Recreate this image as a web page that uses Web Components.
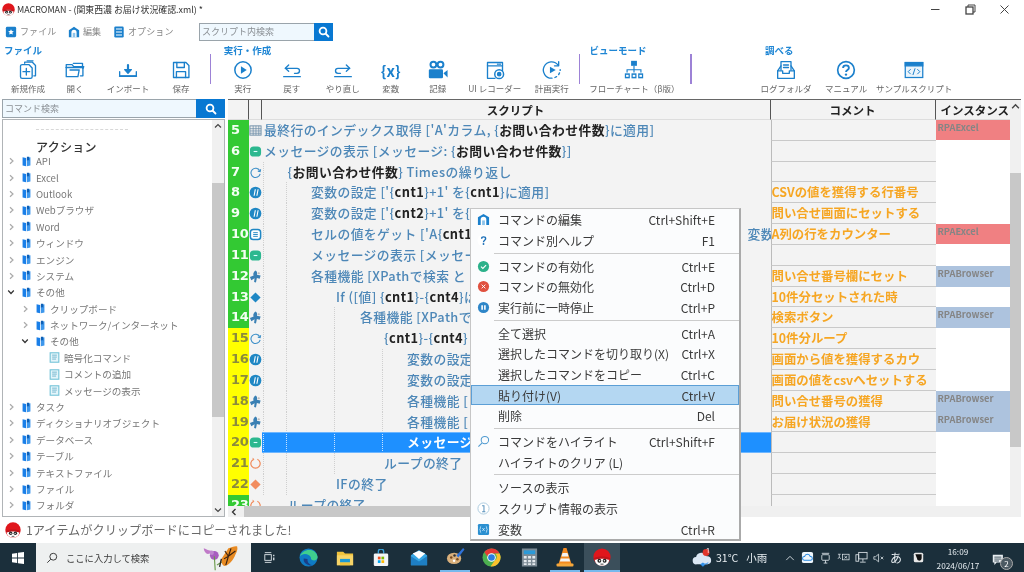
<!DOCTYPE html>
<html lang="ja"><head><meta charset="utf-8"><title>MACROMAN</title>
<style>
html,body{margin:0;padding:0;background:#fff;overflow:hidden}
body{font-family:"Noto Sans CJK JP","Noto Sans",sans-serif;color:#555;width:1024px;height:572px}
</style></head><body>
<app-window>
  <title-bar>MACROMAN - (関東西濃 お届け状況確認.xml) *</title-bar>
  <menu-row>
    <menu-tab icon="tabfile" w="63">ファイル</menu-tab>
    <menu-tab icon="tabedit" w="45">編集</menu-tab>
    <menu-tab icon="tabopt" w="86">オプション</menu-tab>
    <search-box w="134" h="18" btn="19">スクリプト内検索</search-box>
  </menu-row>
  <tool-ribbon>
    <tool-group label="ファイル" lp="4" bp="4" w="210">
      <tool-btn w="48" icon="new">新規作成</tool-btn>
      <tool-btn w="46" icon="open">開く</tool-btn>
      <tool-btn w="60" icon="import">インポート</tool-btn>
      <tool-btn w="46" icon="save">保存</tool-btn>
    </tool-group>
    <tool-sep></tool-sep>
    <tool-group label="実行・作成" lp="12.5" bp="6.5" w="367.5">
      <tool-btn w="50" icon="run">実行</tool-btn>
      <tool-btn w="48" icon="undo">戻す</tool-btn>
      <tool-btn w="54" icon="redo">やり直し</tool-btn>
      <tool-btn w="42" glyph="{x}">変数</tool-btn>
      <tool-btn w="52" icon="rec">記録</tool-btn>
      <tool-btn w="62" icon="uirec">UI レコーダー</tool-btn>
      <tool-btn w="52" icon="plan">計画実行</tool-btn>
    </tool-group>
    <tool-sep></tool-sep>
    <tool-group label="ビューモード" lp="9.5" bp="3.5" w="110.5">
      <tool-btn w="102" icon="flow">フローチャート（β版）</tool-btn>
    </tool-group>
    <tool-sep></tool-sep>
    <tool-group label="調べる" lp="73.5" bp="57.5" w="300">
      <tool-btn w="74" icon="log">ログフォルダ</tool-btn>
      <tool-btn w="46" icon="help">マニュアル</tool-btn>
      <tool-btn w="90" icon="sample">サンプルスクリプト</tool-btn>
    </tool-group>
  </tool-ribbon>
  <main-area>
    <command-panel>
      <search-box w="223" h="19" btn="29">コマンド検索</search-box>
      <command-tree>
        <tree-head>アクション</tree-head>
        <tree-item lv="0" kind="c">API</tree-item>
        <tree-item lv="0" kind="c">Excel</tree-item>
        <tree-item lv="0" kind="c">Outlook</tree-item>
        <tree-item lv="0" kind="c">Webブラウザ</tree-item>
        <tree-item lv="0" kind="c">Word</tree-item>
        <tree-item lv="0" kind="c">ウィンドウ</tree-item>
        <tree-item lv="0" kind="c">エンジン</tree-item>
        <tree-item lv="0" kind="c">システム</tree-item>
        <tree-item lv="0" kind="o">その他</tree-item>
        <tree-item lv="1" kind="c">クリップボード</tree-item>
        <tree-item lv="1" kind="c">ネットワーク/インターネット</tree-item>
        <tree-item lv="1" kind="o">その他</tree-item>
        <tree-item lv="2" kind="d">暗号化コマンド</tree-item>
        <tree-item lv="2" kind="d">コメントの追加</tree-item>
        <tree-item lv="2" kind="d">メッセージの表示</tree-item>
        <tree-item lv="0" kind="c">タスク</tree-item>
        <tree-item lv="0" kind="c">ディクショナリオブジェクト</tree-item>
        <tree-item lv="0" kind="c">データベース</tree-item>
        <tree-item lv="0" kind="c">テーブル</tree-item>
        <tree-item lv="0" kind="c">テキストファイル</tree-item>
        <tree-item lv="0" kind="c">ファイル</tree-item>
        <tree-item lv="0" kind="c">フォルダ</tree-item>
      </command-tree>
    </command-panel>
    <script-grid></script-grid>
  </main-area>
  <status-bar>1アイテムがクリップボードにコピーされました!</status-bar>
  <task-bar></task-bar>
  <context-menu>
    <menu-item icon="mEdit" key="Ctrl+Shift+E">コマンドの編集</menu-item>
    <menu-item icon="mHelp" key="F1">コマンド別ヘルプ</menu-item>
    <menu-sep></menu-sep>
    <menu-item icon="mOk" key="Ctrl+E">コマンドの有効化</menu-item>
    <menu-item icon="mNo" key="Ctrl+D">コマンドの無効化</menu-item>
    <menu-item icon="mPause" key="Ctrl+P">実行前に一時停止</menu-item>
    <menu-sep></menu-sep>
    <menu-item key="Ctrl+A">全て選択</menu-item>
    <menu-item key="Ctrl+X">選択したコマンドを切り取り(X)</menu-item>
    <menu-item key="Ctrl+C">選択したコマンドをコピー</menu-item>
    <menu-item key="Ctrl+V" active>貼り付け(V)</menu-item>
    <menu-item key="Del">削除</menu-item>
    <menu-sep></menu-sep>
    <menu-item icon="mFind" key="Ctrl+Shift+F">コマンドをハイライト</menu-item>
    <menu-item>ハイライトのクリア (L)</menu-item>
    <menu-sep></menu-sep>
    <menu-item>ソースの表示</menu-item>
    <menu-item icon="mInfo">スクリプト情報の表示</menu-item>
    <menu-item icon="mVar" key="Ctrl+R">変数</menu-item>
  </context-menu>
</app-window>
<script>
const B='#1b80cc';
const st=`fill="none" stroke="${B}" stroke-width="1.6" stroke-linecap="round" stroke-linejoin="round"`;
const logo=`<svg viewBox="0 0 24 24"><circle cx="12" cy="12" r="11.5" fill="#e0161c"/><path d="M2.5 15.5C5 11 19 11 21.5 15.5 21 21 17 23.5 12 23.5S3 21 2.5 15.5z" fill="#fff"/><path d="M1 14c4-3.500 18-3.500 22 0-1 1.500-2 1.800-3 1.500-4-1.500-12-1.500-16 0-1 .3-2.200 0-3-1.500z" fill="#c0141a"/><circle cx="8.500" cy="17" r="2.600" fill="#222"/><circle cx="15.500" cy="17" r="2.600" fill="#222"/><circle cx="8.800" cy="17" r="1" fill="#fff"/><circle cx="15.200" cy="17" r="1" fill="#fff"/><path d="M10 21.500h4" stroke="#333" stroke-width="1.200"/></svg>`;
const ICONS={
logo,
new:`<svg viewBox="0 0 24 24" ${st}><path d="M8 4V2.500h9l4 4V19h-2"/><path d="M11 1h7"/><path d="M3 7.500a2 2 0 0 1 2-2h8l4 4V20a2 2 0 0 1-2 2H5a2 2 0 0 1-2-2z"/><path d="M10 10v8M6 14h8"/></svg>`,
open:`<svg viewBox="0 0 24 24" ${st}><path d="M1.500 9V5.500h7l2 2.500h12l-1 2"/><path d="M1.500 9h20v10h-3" /><path d="M1.500 9v11h14l1.500-8H6"/><path d="M21 8V4H10"/></svg>`,
import:`<svg viewBox="0 0 24 24" ${st}><path d="M2 14v5h20v-5" stroke-width="1.600"/><path d="M2 19.500h20" stroke-width="2"/><path d="M12 6v7" stroke-width="2.600"/><path d="M8 11.500l4 4.500 4-4.500z" fill="${B}"/></svg>`,
save:`<svg viewBox="0 0 24 24" ${st} stroke-width="1.800"><path d="M3 3h15l3.500 3.500V21H3z"/><path d="M7 3v6h9V3"/><path d="M6.500 21v-7h11v7"/></svg>`,
run:`<svg viewBox="0 0 24 24" ${st}><circle cx="12" cy="12" r="9.800" stroke-width="1.800"/><path d="M9.500 7.500l7 4.500-7 4.500z" fill="${B}" stroke="none"/></svg>`,
undo:`<svg viewBox="0 0 24 24" ${st} stroke-width="1.800"><path d="M2 20h20"/><path d="M8 6L4 10l4 3.500"/><path d="M4 10h14a3 3 0 0 1 0 6h-3"/></svg>`,
redo:`<svg viewBox="0 0 24 24" ${st} stroke-width="1.800"><path d="M2 20h20"/><path d="M16 6l4 4-4 3.500"/><path d="M20 10H6a3 3 0 0 0 0 6h3"/></svg>`,
rec:`<svg viewBox="0 0 24 24"><circle cx="6.500" cy="5.500" r="3.500" fill="none" stroke="${B}" stroke-width="2.400"/><circle cx="15" cy="5.500" r="3.500" fill="none" stroke="${B}" stroke-width="2.400"/><rect x="1" y="11" width="17" height="11" rx="1.500" fill="${B}"/><path d="M18.500 16l5-4v9z" fill="${B}"/></svg>`,
uirec:`<svg viewBox="0 0 24 24" ${st}><path d="M21 13V3H3v19h9"/><path d="M3 7h18"/><path d="M15 5h1M17.500 5h1" /><circle cx="17" cy="17" r="5.300" stroke-width="1.800"/><circle cx="17" cy="17" r="2" fill="${B}"/></svg>`,
plan:`<svg viewBox="0 0 24 24" ${st} stroke-width="1.800"><path d="M19.500 6.500A9.800 9.800 0 1 0 12 21.800"/><path d="M15.500 21l2-1M20 17.500l1-2M21.800 12.500v-1" /><path d="M20 2v5h-5"/><path d="M9.500 8l7 4-7 4z" fill="${B}" stroke="none"/></svg>`,
flow:`<svg viewBox="0 0 24 24" fill="${B}"><rect x="8.500" y="1" width="7" height="6"/><path d="M11.300 7h1.400v4H21v4h-1.400v-2.600h-6.900V15h-1.400v-2.600H4.400V15H3v-4h8.300z"/><rect x="1" y="16" width="6" height="6"/><rect x="9" y="16" width="6" height="6"/><rect x="17" y="16" width="6" height="6"/><rect x="2.500" y="17.800" width="3" height="2.400" fill="#fff"/><rect x="10.500" y="17.800" width="3" height="2.400" fill="#fff"/><rect x="18.500" y="17.800" width="3" height="2.400" fill="#fff"/></svg>`,
log:`<svg viewBox="0 0 24 24" ${st} stroke-width="1.800"><path d="M6 12V2h12v10"/><path d="M9 6h6M9 9h6"/><path d="M6 7L2 13v9h20v-9l-4-6"/><path d="M2 13h6v3h8v-3h6"/></svg>`,
help:`<svg viewBox="0 0 24 24" fill="none"><circle cx="12" cy="12" r="10" stroke="${B}" stroke-width="2"/><path d="M8.500 9.500C8.500 5.500 15.500 5.500 15.500 9.500c0 2.500-3.500 2.500-3.500 5" stroke="${B}" stroke-width="2.200"/><circle cx="12" cy="17.500" r="1.400" fill="${B}"/></svg>`,
sample:`<svg viewBox="0 0 24 24" fill="none" stroke="${B}" stroke-width="1.500"><rect x="1.500" y="3" width="21" height="18" fill="#eaf4fb"/><path d="M1.500 3h21v4h-21z" fill="${B}"/><path d="M8 11l-3 3 3 3M16 11l3 3-3 3M13.300 10l-2.600 8" stroke-width="1.200"/></svg>`,
search:`<svg viewBox="0 0 24 24" fill="none" stroke="#fff" stroke-width="3.600" stroke-linecap="round"><circle cx="10" cy="10" r="6.800"/><path d="M15.500 15.500L21 21"/></svg>`,
tabfile:`<svg viewBox="0 0 14 14"><rect x="1" y="1" width="12" height="12" rx="1.500" fill="${B}"/><path d="M7 3.800l1 2.100 2.300.3-1.700 1.500.5 2.300L7 9l-2.100 1 .5-2.300L3.700 6.200 6 5.900z" fill="#fff"/></svg>`,
tabedit:`<svg viewBox="0 0 14 14"><path d="M1 13V5l6-4 6 4v8z" fill="${B}"/><path d="M4 13V7.500a3 3 0 0 1 6 0V13z" fill="#fff"/><path d="M5.500 13V8h3v5z" fill="#8cc3ea"/></svg>`,
tabopt:`<svg viewBox="0 0 14 14"><rect x="1.500" y="0.500" width="11" height="13" rx="1.500" fill="${B}"/><path d="M3.500 3.500h7M3.500 7h7M3.500 10.500h7" stroke="#fff" stroke-width="1.300"/></svg>`,
book:`<svg viewBox="0 0 12 14"><path d="M1 1.500L5.500 2.500V13L1 12z" fill="#1a7fe8"/><path d="M6.500 2.500L11 1.500V12L6.500 13z" fill="#3d97ec"/><path d="M6.500 1h3v5L8 5 6.500 6z" fill="#0d5fb5"/></svg>`,
doc:`<svg viewBox="0 0 14 14"><rect x="1.500" y="1" width="11" height="12" fill="#e4f5fa" stroke="#74c3d8" stroke-width="1.400"/><path d="M4 4h6M4 6.500h6M4 9h5" stroke="#5ba8c4" stroke-width="1"/></svg>`,
gridI:`<svg viewBox="0 0 14 14"><rect x="1" y="2" width="12" height="10" fill="#eee" stroke="#6f8fa8"/><path d="M1 5h12M1 7.500h12M1 10h12M4.500 2v10M7.500 2v10M10.500 2v10" stroke="#6f8fa8" stroke-width=".8"/></svg>`,
msgI:`<svg viewBox="0 0 14 14"><rect x="1" y="1.500" width="12" height="11" rx="4" fill="#2cb88f"/><path d="M5 7h4" stroke="#dff" stroke-width="1.200"/></svg>`,
loopI:`<svg viewBox="0 0 14 14" fill="none" stroke="#3c8fc8" stroke-width="1.200"><path d="M11.500 5A5 5 0 1 0 12 8.500"/><path d="M9.500 5.500l2.500.5.500-2.500"/></svg>`,
varI:`<svg viewBox="0 0 14 14"><circle cx="7" cy="7" r="6.300" fill="#1f87c4"/><path d="M6.800 3.500L5.500 10.500M9.800 3.500L8.500 10.500" stroke="#fff" stroke-width="1.200"/></svg>`,
cellI:`<svg viewBox="0 0 14 14"><rect x="1.500" y="1.500" width="11" height="11" rx="3" fill="#fff" stroke="#1f87c4" stroke-width="1.600"/><path d="M4.500 5h5M4.500 7h5M4.500 9h5" stroke="#1f87c4"/></svg>`,
funcI:`<svg viewBox="0 0 14 14" fill="#3a80b4"><path d="M7 .5c2 1 2 3 1.500 4.500l4 1-1 3.500-3-1-1 5-2-.5L6 9 2.500 11 1 7.500l4-1.500C4 4 5 2 7 .5z"/><circle cx="10.500" cy="3.500" r="1.200" fill="#bbb"/></svg>`,
ifI:`<svg viewBox="0 0 14 14"><path d="M7 1.500L12.500 7 7 12.500 1.500 7z" fill="#1f87c4"/></svg>`,
loopE:`<svg viewBox="0 0 14 14" fill="none" stroke="#f08a5a" stroke-width="1.300"><path d="M9 2.500A5 5 0 1 1 5 2.500"/><path d="M4 1l1.200 1.700L3.500 4" stroke-width="1"/></svg>`,
ifE:`<svg viewBox="0 0 14 14"><path d="M7 1.500L12.500 7 7 12.500 1.500 7z" fill="#f28c5e"/></svg>`,
mEdit:`<svg viewBox="0 0 14 14"><path d="M1 13V4.500L7 1l6 3.500V13z" fill="#1b80cc"/><path d="M4 13V7a3 3 0 0 1 6 0v6z" fill="#fff"/><path d="M5.500 13V8h3v5z" fill="#8cc3ea"/></svg>`,
mOk:`<svg viewBox="0 0 14 14"><circle cx="7" cy="7" r="6" fill="#2cb18a"/><path d="M4.300 7.200L6.300 9l3.500-3.600" stroke="#fff" stroke-width="1.200" fill="none"/></svg>`,
mNo:`<svg viewBox="0 0 14 14"><circle cx="7" cy="7" r="6" fill="#e0513f"/><path d="M5 5l4 4M9 5l-4 4" stroke="#fff" stroke-width="1"/></svg>`,
mPause:`<svg viewBox="0 0 14 14"><circle cx="7" cy="7" r="6" fill="#2e86c8"/><path d="M5.500 4.500v5M8.500 4.500v5" stroke="#fff" stroke-width="1.700"/></svg>`,
mFind:`<svg viewBox="0 0 14 14" fill="none" stroke="#4f9ad0" stroke-width="1.100"><circle cx="8.500" cy="5.500" r="4"/><path d="M5.500 8.500L1.500 12.500"/></svg>`,
mInfo:`<svg viewBox="0 0 14 14"><circle cx="7" cy="7" r="6" fill="#fff" stroke="#a9c9de"/><path d="M5.500 4h2v6M5.500 10.500h3.500" stroke="#5b93bd" stroke-width="1.100" fill="none"/></svg>`,
mVar:`<svg viewBox="0 0 14 14"><rect x="1" y="1" width="12" height="12" rx="1.500" fill="#2a8fd0"/><path d="M4.500 3.500C3 3.500 4 7 3 7c1 0 0 3.500 1.500 3.500M9.500 3.500C11 3.500 10 7 11 7c-1 0-0 3.500-1.500 3.500M5.800 5.500l2.400 3M8.200 5.500l-2.400 3" stroke="#d9f0ff" stroke-width=".8" fill="none"/></svg>`,
win:`<svg viewBox="0 0 14 14" fill="#fff"><path d="M0 2l6-.8V6.500H0zM7 1L14 0v6.500H7zM0 7.500h6v5.300L0 12zM7 7.500h7V14l-7-1z"/></svg>`,
mag:`<svg viewBox="0 0 14 14" fill="none" stroke="#333" stroke-width="1.100"><circle cx="8.500" cy="5.500" r="4"/><path d="M5.500 8.500L1.500 12.500"/></svg>`,
taskv:`<svg viewBox="0 0 16 14" fill="none" stroke="#dfe6ea" stroke-width="1.100"><path d="M1 1h8M1 13h8"/><rect x="1" y="3.500" width="8" height="7"/><path d="M12 3.500v2M12 7v3.500" stroke-width="1.600"/><path d="M15 1v0"/></svg>`,
edge:`<svg viewBox="0 0 20 20"><circle cx="10" cy="10" r="9.500" fill="#0f7bc4"/><path d="M1 9C3 1 17-1 19.500 9c.5 3-2 4.500-5 4-2-.5-2-2-2-3C11 5.500 3 5 1 9z" fill="#3fcf8e"/><path d="M5 11c-1 4 4 8.500 10 7-4 0-6.500-3-6-6.500z" fill="#1b3f86"/></svg>`,
folder:`<svg viewBox="0 0 20 20"><path d="M1 3h7l2 2h9v13H1z" fill="#f0c33c"/><rect x="1" y="7" width="18" height="11" fill="#f7d568"/><rect x="4.500" y="11" width="11" height="4" fill="#1a9ad6"/><rect x="4.500" y="15" width="11" height="3" fill="#f0c33c"/></svg>`,
store:`<svg viewBox="0 0 20 20"><path d="M7 5V3a3 3 0 0 1 6 0v2" fill="none" stroke="#39a5e0" stroke-width="1.400"/><rect x="2" y="5" width="16" height="14" rx="1.500" fill="#f2f5f7"/><rect x="6.500" y="8.500" width="3" height="3" fill="#f25022"/><rect x="10.500" y="8.500" width="3" height="3" fill="#7fba00"/><rect x="6.500" y="12.500" width="3" height="3" fill="#00a4ef"/><rect x="10.500" y="12.500" width="3" height="3" fill="#ffb900"/></svg>`,
mail:`<svg viewBox="0 0 20 20"><path d="M1 7l9-6 9 6v11H1z" fill="#35a7e5"/><path d="M1 8l9 6 9-6v10H1z" fill="#1e7fc4"/><path d="M3 5l7-3 7 3-7 6z" fill="#fff"/></svg>`,
paint:`<svg viewBox="0 0 20 20"><ellipse cx="8.500" cy="12" rx="7.500" ry="6" fill="#d9b07c"/><circle cx="5.500" cy="11" r="1.300" fill="#7a4a1e"/><circle cx="8.500" cy="14.500" r="1.300" fill="#fff"/><circle cx="12" cy="13" r="1.300" fill="#7a4a1e"/><circle cx="9" cy="9" r="1.300" fill="#333"/><path d="M11 9l7-8 1.500 1.500L13 11z" fill="#2f72d8"/></svg>`,
chrome:`<svg viewBox="0 0 20 20"><circle cx="10" cy="10" r="9.500" fill="#4caf50"/><path d="M10 .5a9.500 9.500 0 0 1 8.500 5.200H10A4.500 4.500 0 0 0 5.700 9L2.500 4.200A9.500 9.500 0 0 1 10 .5z" fill="#e53935"/><path d="M18.500 5.700A9.500 9.500 0 0 1 9 19.400l4.200-6A4.500 4.500 0 0 0 14 6z" fill="#fbc02d"/><circle cx="10" cy="10" r="4.500" fill="#fff"/><circle cx="10" cy="10" r="3.500" fill="#2a7de1"/></svg>`,
calc:`<svg viewBox="0 0 20 20"><rect x="2" y="0.500" width="16" height="19" fill="#7b8a94"/><rect x="4" y="2.500" width="12" height="4" fill="#2b9ad8"/><path d="M4 8.500h3v2.500H4zM8.500 8.500h3v2.500h-3zM13 8.500h3v2.500h-3zM4 12.500h3V15H4zM8.500 12.500h3V15h-3zM13 12.500h3V15h-3zM4 16h3v2H4zM8.500 16h3v2h-3zM13 16h3v2h-3z" fill="#e4eaee"/></svg>`,
vlc:`<svg viewBox="0 0 20 20"><path d="M8.500 1h3l5 16h-13z" fill="#f58a1f"/><path d="M7.500 6h5l1 3.500h-7zM5.800 11.500h8.400l1 3H4.800z" fill="#f4f4f4"/><rect x="1.500" y="16.500" width="17" height="3" rx="1" fill="#f5a73b"/></svg>`,
cloud:`<svg viewBox="0 0 22 20"><path d="M5 17a4 4 0 0 1-.5-8A6 6 0 0 1 16 8a4.500 4.500 0 0 1 1 9z" fill="#dbe7f4"/><path d="M9 17l3-2 3 2-3 2.500z" fill="#2f8fe8"/><path d="M6 17h11a4 4 0 0 0 1-3c-3 3-9 3-12 3z" fill="#5fa8ee"/><circle cx="15.500" cy="4" r="3.800" fill="#e0352b"/></svg>`,
up:`<svg viewBox="0 0 12 12" fill="none" stroke="#e8eef2" stroke-width="1"><path d="M1.500 8.500L6 4l4.500 4.500"/></svg>`,
onedrive:`<svg viewBox="0 0 14 14"><rect x="1" y="1" width="12" height="12" rx="2" fill="#eef6fc"/><path d="M3.500 10a2 2 0 0 1 .3-4A3.200 3.200 0 0 1 10 6a2 2 0 0 1 .4 4z" fill="none" stroke="#2a8ae0" stroke-width="1.100"/></svg>`,
meet:`<svg viewBox="0 0 14 14" fill="none" stroke="#dfe6ea" stroke-width=".9"><rect x="3" y="4" width="8" height="6" rx="1"/><path d="M3 2.500h8M7 10v3M5 13h4"/></svg>`,
tray1:`<svg viewBox="0 0 14 14" fill="none" stroke="#dfe6ea" stroke-width=".8"><rect x="6" y="3.500" width="7" height="6"/><path d="M1 3.500h3M2.500 3.500v3l-1.500 2M2.500 6.500L4 8.500M8 5.500l3 2.500M11 5.500L8 8"/></svg>`,
net:`<svg viewBox="0 0 14 14" fill="none" stroke="#dfe6ea" stroke-width=".9"><rect x="4" y="1.500" width="9" height="7"/><rect x="1" y="4" width="3" height="7"/><path d="M8.500 8.500v3M5.500 12h6"/></svg>`,
mute:`<svg viewBox="0 0 14 14" fill="none" stroke="#dfe6ea" stroke-width=".9"><path d="M1 5.500h2L6.500 2.500v9L3 8.500H1z"/><path d="M9 5.500l3 3M12 5.500l-3 3"/></svg>`,
app:`<svg viewBox="0 0 14 14"><rect x="1" y="1" width="12" height="12" rx="2" fill="#e8e8e8"/><path d="M3 3h8v5a3 3 0 0 1-6 0z" fill="#111"/></svg>`,
notif:`<svg viewBox="0 0 18 18"><path d="M1 1h13v10H6l-3 3v-3H1z" fill="#e8eef2"/><path d="M3 4h9M3 6.500h9M3 9h6" stroke="#1b2f3b"/></svg>`,
butterfly:`<svg viewBox="0 0 50 28"><path d="M2 3c3 1 6 3 9 3-1 3-4 4-6 3C3 7 2 5 2 3z" fill="#c07ac8"/><circle cx="14" cy="11" r="5" fill="#a85ec0"/><circle cx="11" cy="8" r="2.500" fill="#c088d0"/><path d="M14 12l1 16" stroke="#6a9a4a" stroke-width="1.300"/><path d="M17 22l8-5" stroke="#6a9a4a" stroke-width="1.300"/><path d="M22 15L30 3c3-1 8-3 10-2 1 4-1 7-2 9-2 6-8 13-13 13-3-2-3-5-3-8z" fill="#e88b23"/><path d="M26 6l4 6M33 3l-3 9M38 6l-8 6M25 15l5-3M27 22l3-10" stroke="#3a2312" stroke-width="1.300"/><path d="M22 15L20 24" stroke="#222" stroke-width="1.500"/></svg>`
};
ICONS.mHelp=`<svg viewBox="0 0 14 14"><circle cx="7" cy="7" r="6.500" fill="#fff"/><path d="M5 5C5 2.500 9.300 2.500 9.300 5 9.300 6.800 7 6.800 7 8.800" fill="none" stroke="#1b6fb8" stroke-width="1.500"/><circle cx="7" cy="10.800" r="1" fill="#1b6fb8"/></svg>`;

function def(name,css,html,init){
  customElements.define(name,class extends HTMLElement{
    connectedCallback(){
      if(this.shadowRoot)return;
      const r=this.attachShadow({mode:'open'});
      const a=n=>this.getAttribute(n);
      r.innerHTML=`<style>${css}</style>`+(typeof html==='function'?html(a,this):html);
      if(init)init(r,a,this);
    }
  });
}
def('x-icon',':host{display:inline-flex;flex:none}svg{width:100%;height:100%;display:block}',(a)=>ICONS[a('name')]||'',(r,a,t)=>{const s=a('size')||14;t.style.width=s+'px';t.style.height=s+'px';});

def('app-window',`:host{display:flex;flex-direction:column;position:relative;width:1024px;height:572px;overflow:hidden;background:#fff;filter:blur(.3px)}`,'<slot></slot>');

def('title-bar',`:host{display:flex;align-items:center;height:20px;flex:none;font-size:8.900px;color:#333;padding:0 0 2px 2px;box-sizing:border-box}
.t{margin-left:2px;flex:1;white-space:nowrap}.w{display:flex;color:#444}.w span{width:34.500px;display:flex;justify-content:center}
svg{width:11px;height:11px;display:block}`,
`<x-icon name="logo" size="13"></x-icon><span class="t"><slot></slot></span><div class="w" style="margin-right:2px"><span><svg viewBox="0 0 11 11"><path d="M1 5.500h8.500" stroke="#444"/></svg></span><span><svg viewBox="0 0 11 11" fill="none" stroke="#444"><rect x="1" y="3" width="7" height="7" stroke-width="1.300"/><path d="M3 3V1h7v7H8" /></svg></span><span><svg viewBox="0 0 11 11"><path d="M1.500 1.500l8 8M9.500 1.500l-8 8" stroke="#444"/></svg></span></div>`);

def('menu-row',`:host{display:flex;align-items:center;height:23px;flex:none;padding-left:5px}`,'<slot></slot>');
def('menu-tab',`:host{display:flex;align-items:center;font-size:9px;letter-spacing:.1px;color:#888;gap:3px;flex:none}`,
 a=>`<x-icon name="${a('icon')}" size="12"></x-icon><slot></slot>`,(r,a,t)=>{t.style.width=a('w')+'px'});
def('search-box',`:host{display:flex;flex:none;box-sizing:border-box;border:1px solid #9aa4ab;background:#eff8fe;font-size:9px;color:#8a8f94;align-items:center}
.t{flex:1;padding-left:2px;white-space:nowrap}.b{align-self:stretch;background:#0878d2;display:flex;align-items:center;justify-content:center;margin:-1px -1px -1px 0}`,
 a=>`<span class="t"><slot></slot></span><span class="b" style="width:${a('btn')}px"><x-icon name="search" size="12"></x-icon></span>`,
 (r,a,t)=>{t.style.width=a('w')+'px';t.style.height=a('h')+'px'});

def('tool-ribbon',`:host{display:flex;height:54px;flex:none}`,'<slot></slot>');
def('tool-group',`:host{display:flex;flex-direction:column;flex:none}
.l{font-size:9.500px;font-weight:700;color:#1f86d4;height:16px;line-height:15px;white-space:nowrap}.b{display:flex}`,
 a=>`<div class="l" style="padding-left:${a('lp')}px">${a('label')}</div><div class="b" style="padding-left:${a('bp')}px"><slot></slot></div>`,
 (r,a,t)=>{t.style.width=a('w')+'px'});
def('tool-sep',`:host{display:block;flex:none;width:1.200px;height:30px;margin-top:11px;background:#9d82d6}`,'');
def('tool-btn',`:host{display:flex;flex-direction:column;align-items:center;flex:none;font-size:8.500px;color:#666;white-space:nowrap}
.i{height:22px;display:flex;align-items:center;justify-content:center;color:#1b80cc;font-size:15px;font-weight:700}
.s{line-height:14px}`,
 a=>`<div class="i">${a('glyph')?a('glyph'):`<x-icon name="${a('icon')}" size="20"></x-icon>`}</div><div class="s"><slot></slot></div>`,
 (r,a,t)=>{t.style.width=a('w')+'px'});

def('main-area',`:host{display:flex;gap:3px;height:420px;flex:none;padding:2px 2px 0 2px;box-sizing:border-box}`,'<slot></slot>');
def('command-panel',`:host{display:flex;flex-direction:column;width:223px;flex:none;gap:1px}`,'<slot></slot>');
def('command-tree',`:host{display:flex;flex:1;box-sizing:border-box;border:1px solid #b0b4b7;min-height:0;background:#fff}
.c{flex:1;overflow:hidden;padding-top:9px}.s{width:12px;background:#f0f0f0;display:flex;flex-direction:column;align-items:center;font-size:8px;color:#444}
.a{height:12px;width:12px;display:flex;align-items:center;justify-content:center}svg{width:8px;height:8px}
.sp{height:51px;flex:none}.th{height:234px;background:#c8c8c8;width:100%;flex:none}.f{flex:1}`,
`<div class="c"><slot></slot></div><div class="s"><div class="a"><svg viewBox="0 0 8 8" fill="none" stroke="#444" stroke-width="1.200"><path d="M1 5.500L4 2.500l3 3"/></svg></div><div class="sp"></div><div class="th"></div><div class="f"></div><div class="a"><svg viewBox="0 0 8 8" fill="none" stroke="#444" stroke-width="1.200"><path d="M1 2.500L4 5.500l3-3"/></svg></div></div>`);
def('tree-head',`:host{display:block;margin-left:33px;font-size:12px;font-weight:500;color:#333;height:24px;line-height:16px;letter-spacing:.3px}
.d{border-top:1px dashed #d8d8d8;width:92px;height:0;margin-bottom:9px}`,'<div class="d"></div><slot></slot>');
def('tree-item',`:host{display:flex;align-items:center;height:16.400px;font-size:9.600px;color:#777;white-space:nowrap}
.ch{width:8px;height:8px;flex:none;margin-right:6px}.ch svg{display:block;width:8px;height:8px}.ico{margin-right:4px}`,
 a=>{const k=a('kind');const p=k==='c'?'M3 1.200l3 2.800-3 2.800':'M1.200 2.500L4 5.500l2.800-3';
   const col=k==='c'?'#aaa':'#333';
   return k==='d'?`<x-icon class="ico" name="doc" size="11"></x-icon><slot></slot>`:
   `<span class="ch"><svg viewBox="0 0 8 8" fill="none" stroke="${col}" stroke-width="1.200"><path d="${p}"/></svg></span><x-icon class="ico" name="book" size="11"></x-icon><slot></slot>`},
 (r,a,t)=>{const l=+a('lv');t.style.paddingLeft=(l===2?46:(4+14*l))+'px'});

def('script-grid',`:host{display:grid;grid-template-columns:781.500px 11.500px;grid-template-rows:1fr 11px;flex:none;min-height:0;width:793px;border-top:1px solid #666;box-sizing:border-box}
.m{overflow:hidden;min-height:0;grid-column:1;grid-row:1}
.vs{background:#f0f0f0;display:flex;flex-direction:column;align-items:center;grid-column:2;grid-row:1/3}
.a{height:12px;flex:none}.a svg{width:9px;height:9px;display:block;margin:2px auto}
.vt{height:274px;width:100%;background:#c8c8c8;margin-top:61px;flex:none}
.hs{background:#f0f0f0;display:flex;align-items:center;padding-left:2px;grid-column:1;grid-row:2}.hs svg{width:8px;height:8px;flex:none}.ht{height:100%;width:380px;margin-left:6px;background:#c8c8c8}`,
 ()=>`<div class="m"><slot></slot></div>
 <div class="vs"><div class="a"><svg viewBox="0 0 8 8" fill="none" stroke="#444" stroke-width="1.200"><path d="M1 5.500L4 2.500l3 3"/></svg></div><div class="vt"></div></div>
 <div class="hs"><svg viewBox="0 0 8 8" fill="none" stroke="#333" stroke-width="1.300"><path d="M5.500 1L2.500 4l3 3"/></svg><div class="ht"></div></div>`,
 (r,a,t)=>{
  const bb=s=>'{<b>'+s+'</b>}';
  const R=[
   [5,'g','gridI',0,`最終行のインデックス取得 ['A'カラム, ${bb('お問い合わせ件数')}に適用]`,'','E'],
   [6,'g','msgI',0,`メッセージの表示 [メッセージ: ${bb('お問い合わせ件数')}]`,'',''],
   [7,'g','loopI',1,`${bb('お問い合わせ件数')} Timesの繰り返し`,'',''],
   [8,'g','varI',2,`変数の設定 ['${bb('cnt1')}+1' を${bb('cnt1')}に適用]`,'CSVの値を獲得する行番号',''],
   [9,'g','varI',2,`変数の設定 ['${bb('cnt2')}+1' を{`,'問い合せ画面にセットする',''],
   [10,'g','cellI',2,`セルの値をゲット ['A{<b>cnt1</b> <span style="margin-left:272px">変数</span>`,'A列の行をカウンター','E'],
   [11,'g','msgI',2,`メッセージの表示 [メッセー`,'',''],
   [12,'g','funcI',2,`各種機能 [XPathで検索 と`,'問い合せ番号欄にセット','B'],
   [13,'g','ifI',3,`If ([値] ${bb('cnt1')}-${bb('cnt4')}は`,'10件分セットされた時',''],
   [14,'g','funcI',4,`各種機能 [XPathで`,'検索ボタン','B'],
   [15,'y','loopI',5,`${bb('cnt1')}-${bb('cnt4')}`,'10件分ループ',''],
   [16,'y','varI',6,`変数の設定`,'画面から値を獲得するカウ',''],
   [17,'y','varI',6,`変数の設定`,'画面の値をcsvへセットする',''],
   [18,'y','funcI',6,`各種機能 [`,'問い合せ番号の獲得','B'],
   [19,'y','funcI',6,`各種機能 [`,'お届け状況の獲得','B'],
   [20,'y','msgI',6,`メッセージ`,'','',1],
   [21,'y','loopE',5,`ループの終了`,'',''],
   [22,'y','ifE',3,`IFの終了`,'',''],
   [23,'g','loopE',1,`ループの終了`,'','']
  ];
  const X=[0,23.5,47,72,96,120,143];
  R.forEach(d=>{
    const [n,c,ic,l,txt,cm,ins,sel]=d;
    const g=[];
    if(n>=7&&n<=22)g.push(1.5);if(n>=8&&n<=22)g.push(24.5);if(n>=14&&n<=21)g.push(72.5);if(n>=16&&n<=20)g.push(120.5);
    const e=document.createElement('script-row');
    e.setAttribute('n',n);e.setAttribute('c',c);e.setAttribute('ic',ic);e.setAttribute('ind',X[l]);
    e.setAttribute('g',g.join(','));e.setAttribute('cm',cm);e.setAttribute('ins',ins);
    if(sel)e.setAttribute('sel','');
    e.innerHTML=txt;
    t.appendChild(e);
  });
  const h=document.createElement('grid-head');
  t.insertBefore(h,t.firstChild);
 });
def('grid-head',`:host{display:grid;grid-template-columns:21px 12.500px 509px 165px 74px;height:20px;background:#f3f3f3;font-size:11.500px;font-weight:700;color:#222;white-space:nowrap}
div{box-sizing:border-box;border-right:1px solid #555;text-align:center;line-height:20px;overflow:hidden;border-bottom:1px solid #ddd}
div:first-child{border-left:1px solid #ccc}.l{border-right:0;text-align:left;padding-left:5px}`,
 `<div></div><div></div><div>スクリプト</div><div>コメント</div><div class="l">インスタンス</div>`);
def('script-row',`:host{display:grid;grid-template-columns:21px 12.500px 509px 165px 74px;height:20.830px;font-size:12.800px;letter-spacing:.42px;font-weight:500;color:#4d87b7;white-space:nowrap}
.n{font:700 13px "DejaVu Sans",sans-serif;letter-spacing:-.3px;padding-left:3px;line-height:20px;overflow:hidden}
.n.g{background:#33c933;color:#f2fff2}.n.y{background:#ffff00;color:#8b8b3c}
.ic{background:#f3f3f3;display:flex;align-items:center;justify-content:center}
.s{background-color:#f3f3f3;overflow:hidden;line-height:20px;box-sizing:border-box}
.s.sel{color:#fff;font-weight:700;box-shadow:inset 0 1px #6db6ff,inset 0 -1px #6db6ff}
.c{background:#f3f3f3;border-left:1.500px solid #bbb;border-bottom:1.500px solid #c9c9c9;box-sizing:border-box;font-size:12.400px;letter-spacing:0;font-weight:700;color:#f6a623;line-height:20px;overflow:hidden}
.i{font-size:9.300px;letter-spacing:0;font-weight:700;color:#858585;padding-left:2px;line-height:14px;background:#fff}
.i.E{background:#f08082;margin-bottom:1px}.i.B{background:#adc3de}
::slotted(b){color:#222}`,
 a=>{
  const sel=a('sel')!==null;
  const col=sel?'rgba(255,255,255,.75)':'#cfcfcf';
  const g=(a('g')||'').split(',').filter(Boolean).map(x=>`repeating-linear-gradient(${col} 0 1px,transparent 1px 2px) ${x}px 0/1px 100% no-repeat`);
  g.push(sel?'#1e90ff':'#f3f3f3');
  const ins=a('ins');
  return `<div class="n ${a('c')}">${a('n')}</div><div class="ic"><x-icon name="${a('ic')}" size="13"></x-icon></div>
  <div class="s ${sel?'sel':''}" style="background:${g.join(',')};padding-left:${2.5+ +a('ind')}px"><slot></slot></div>
  <div class="c">${a('cm')}</div><div class="i ${ins}">${ins==='E'?'RPAExcel':ins==='B'?'RPABrowser':''}</div>`;
 });

def('status-bar',`:host{display:flex;align-items:center;height:26px;flex:none;font-size:12.200px;color:#6a6a6a;padding-left:5px;gap:5px;white-space:nowrap}`,
 `<x-icon name="logo" size="16"></x-icon><slot></slot>`);

def('task-bar',`:host{display:flex;height:29px;flex:none;background:#1b2f3b;color:#e8eef2;align-items:center}
.st{width:36px;display:flex;justify-content:center;flex:none}
.se{width:215px;height:29px;background:#eef0f0;color:#3a3a3a;display:flex;align-items:center;font-size:9.300px;flex:none;box-sizing:border-box;padding-left:10px;gap:8px}
.se .tx{flex:1;white-space:nowrap}
.ap{display:flex;flex:none;align-items:stretch;height:29px}
.ap div{display:flex;align-items:center;justify-content:center;box-sizing:border-box;flex:none}
.ap .on{border-bottom:2px solid #76b9ed}.ap .ac{background:#3b4f5b;border-bottom:2px solid #76b9ed}
.wx{display:flex;align-items:center;font-size:10.500px;margin-left:72px;gap:4px;white-space:nowrap;flex:none;width:89px}
.tr{display:flex;align-items:center;flex:none}
.tr span{display:flex;justify-content:center;align-items:center;height:20px}
.kn{font-size:12px}
.ck{font-size:8.200px;line-height:14px;text-align:center;width:52px;flex:none;color:#e8eef2}
.nt{position:relative;width:18px;height:18px;margin-left:8px;flex:none}
.bd{position:absolute;right:-3px;bottom:-3px;width:11px;height:11px;border-radius:50%;background:#4c5a63;font-size:8px;line-height:11px;text-align:center;color:#fff;border:.5px solid #aaa}
.bb{position:absolute;right:0;top:-1px;font:7px/8px "Noto Sans",sans-serif;width:8px;text-align:center;color:#fff}
.wi{position:relative;display:flex}`,
 ()=>{
  const I=(n,w,s,c='',m=0)=>`<div class="${c}" style="width:${w}px;margin-right:${m}px"><x-icon name="${n}" size="${s}"></x-icon></div>`;
  return `<div class="st"><x-icon name="win" size="12"></x-icon></div>
  <div class="se"><x-icon name="mag" size="12"></x-icon><span class="tx">ここに入力して検索</span><x-icon name="butterfly" size="44" style="height:29px;width:44px;margin-right:5px"></x-icon></div>
  <div class="ap">${I('taskv',38,13)}${I('edge',38,19)}${I('folder',36,18)}${I('store',35,18)}${I('mail',42,18)}${I('paint',30,19,'on')}${I('chrome',43,19)}${I('calc',32,19,'',5)}${I('vlc',30,20,'on',4)}${I('logo',36,18,'ac')}</div>
  <div class="wx"><span class="wi"><x-icon name="cloud" size="20"></x-icon><span class="bb">1</span></span><span>31°C</span><span style="margin-left:4px">小雨</span></div>
  <div class="tr"><span style="width:17px"><x-icon name="up" size="10"></x-icon></span><span style="width:18px"><x-icon name="onedrive" size="13"></x-icon></span><span style="width:18px"><x-icon name="meet" size="13"></x-icon></span><span style="width:18px"><x-icon name="tray1" size="13"></x-icon></span><span style="width:18px"><x-icon name="net" size="13"></x-icon></span><span style="width:18px"><x-icon name="mute" size="12"></x-icon></span><span class="kn" style="width:16px">あ</span><span style="width:28px"><x-icon name="app" size="11"></x-icon></span></div>
  <div class="ck">16:09<br>2024/06/17</div>
  <div class="nt"><x-icon name="notif" size="14"></x-icon><span class="bd">2</span></div>`;
 });

def('context-menu',`:host{position:absolute;left:470px;top:208px;width:271px;height:333px;box-sizing:border-box;display:block;background:#fbfcfd;border:1px solid #c6c6c6;border-right:2px solid #aaa;border-bottom:2px solid #aaa;padding-top:.5px}`,'<slot></slot>');
def('menu-sep',`:host{display:block;height:4.900px;box-sizing:border-box;padding-top:2px;margin-left:23px}div{height:1px;background:#ccc}`,'<div></div>');
def('menu-item',`:host{display:flex;align-items:center;height:20.700px;font-size:12px;color:#3a3a3a;white-space:nowrap;box-sizing:border-box}
.g{width:27px;display:flex;justify-content:center;flex:none;padding-right:3px;box-sizing:border-box}
.t{flex:1}.k{padding-right:24px}
:host([active]){background:#b4d7f2;box-shadow:inset 0 0 0 1px #5c9fd6}`,
 a=>`<span class="g">${a('icon')?`<x-icon name="${a('icon')}" size="13"></x-icon>`:''}</span><span class="t"><slot></slot></span><span class="k">${a('key')||''}</span>`);
</script>
</body></html>
